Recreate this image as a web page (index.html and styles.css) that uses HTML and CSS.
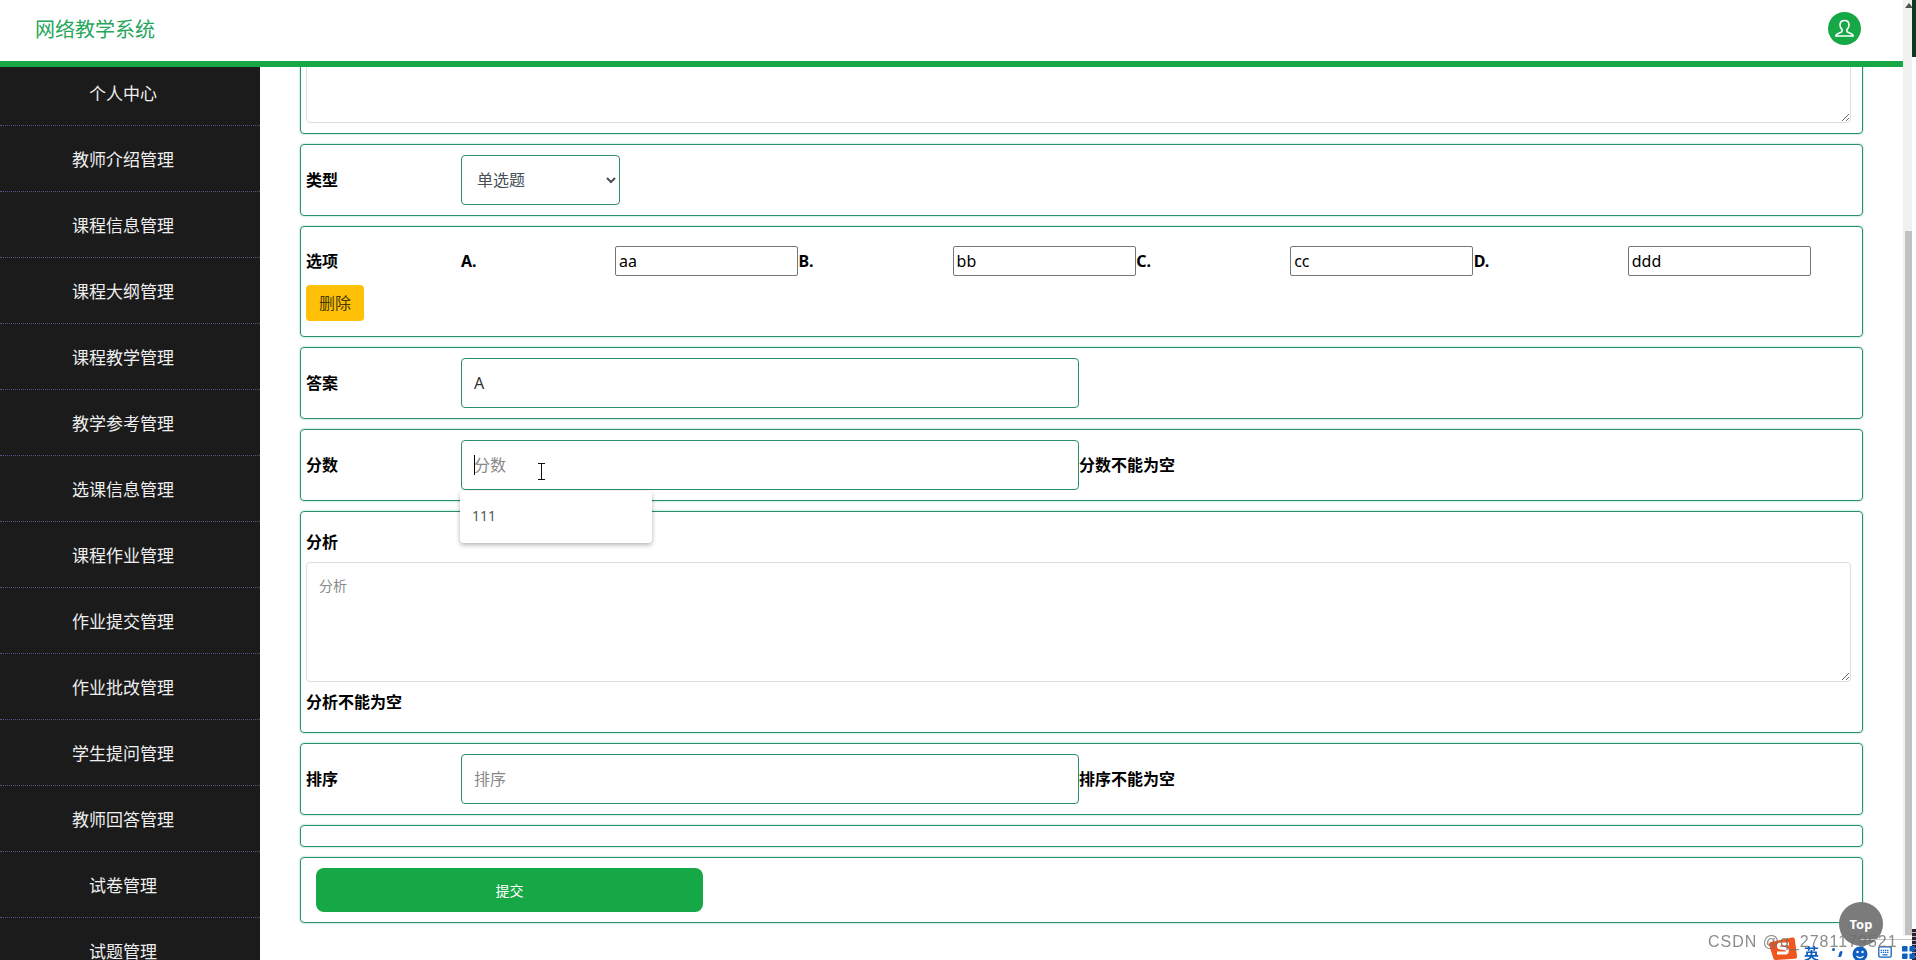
FILE: index.html
```html
<!DOCTYPE html>
<html lang="zh-CN">
<head>
    <meta charset="UTF-8">
    <title>网络教学系统</title>
    <link rel="stylesheet" href="styles.css">
</head>
<body>
    <div class="page">
        <header class="topbar">
            <span class="brand">网络教学系统</span>
            <span class="avatar">
                <svg viewBox="0 0 33 33" width="33" height="33" fill="none" stroke="#fff" stroke-width="1.6">
                    <path d="M16.500 8.500c-2.800 0-4.500 2-4.500 4.600 0 2 .9 3.500 2.100 4.500v1.300c0 .7-.4 1.100-1.100 1.400l-3.300 1.400c-1.200.5-1.800 1.200-1.900 2.300h17.400c-.1-1.100-.7-1.800-1.900-2.300l-3.300-1.400c-.7-.3-1.100-.7-1.100-1.400v-1.300c1.200-1 2.100-2.500 2.100-4.500 0-2.600-1.700-4.600-4.500-4.600z"/>
                </svg>
            </span>
        </header>

        <div class="layout">
            <!-- Side menu -->
            <nav class="sidebar">
                <a class="menu-item">个人中心</a>
                <a class="menu-item">教师介绍管理</a>
                <a class="menu-item">课程信息管理</a>
                <a class="menu-item">课程大纲管理</a>
                <a class="menu-item">课程教学管理</a>
                <a class="menu-item">教学参考管理</a>
                <a class="menu-item">选课信息管理</a>
                <a class="menu-item">课程作业管理</a>
                <a class="menu-item">作业提交管理</a>
                <a class="menu-item">作业批改管理</a>
                <a class="menu-item">学生提问管理</a>
                <a class="menu-item">教师回答管理</a>
                <a class="menu-item">试卷管理</a>
                <a class="menu-item">试题管理</a>
            </nav>

            <!-- Question form, scrolled down a bit -->
            <main class="content">
                <form class="question-form">
                    <div class="panel panel-first">
                        <textarea class="area area-first"></textarea>
                    </div>

                    <div class="panel row">
                        <label class="field-label">类型</label>
                        <select class="field-select">
                            <option>单选题</option>
                        </select>
                    </div>

                    <div class="panel">
                        <div class="row options-row">
                            <label class="field-label">选项</label>
                            <div class="options">
                                <div class="option"><b class="option-key">A.</b><input class="option-input" value="aa"></div>
                                <div class="option"><b class="option-key">B.</b><input class="option-input" value="bb"></div>
                                <div class="option"><b class="option-key">C.</b><input class="option-input" value="cc"></div>
                                <div class="option"><b class="option-key">D.</b><input class="option-input" value="ddd"></div>
                            </div>
                        </div>
                        <button type="button" class="btn-delete">删除</button>
                    </div>

                    <div class="panel row">
                        <label class="field-label">答案</label>
                        <input class="field-input" value="A">
                    </div>

                    <div class="panel row">
                        <label class="field-label">分数</label>
                        <div class="input-wrap">
                            <input class="field-input" placeholder="分数">
                            <span class="caret"></span>
                            <svg class="ibeam" viewBox="0 0 9 17" width="9" height="17" fill="none" stroke="#111" stroke-width="1">
                                <path d="M1 .5h7M4.500.5v16M1 16.500h7"/>
                            </svg>
                            <div class="suggest">111</div>
                        </div>
                        <span class="field-error">分数不能为空</span>
                    </div>

                    <div class="panel panel-analysis">
                        <label class="field-label label-block">分析</label>
                        <textarea class="area area-analysis" placeholder="分析"></textarea>
                        <div class="field-error error-block">分析不能为空</div>
                    </div>

                    <div class="panel row">
                        <label class="field-label">排序</label>
                        <input class="field-input" placeholder="排序">
                        <span class="field-error">排序不能为空</span>
                    </div>

                    <div class="panel"></div>

                    <div class="panel">
                        <button type="button" class="btn-submit">提交</button>
                    </div>
                </form>
            </main>
        </div>
    </div>

    <!-- Page scrollbar -->
    <div class="scrollbar">
        <span class="scroll-up"></span>
        <span class="scroll-thumb"></span>
    </div>
    <div class="desk-edge"></div>
    <div class="desk-corner"></div>

    <a class="to-top">Top</a>

    <!-- Input method toolbar at the bottom corner -->
    <div class="ime-line"></div>
    <svg class="ime-logo" viewBox="0 0 29 23" width="29" height="23">
        <path d="M3 5 24 .5c1.500-.3 2.500.3 2.800 1.800L29 19c.2 1.500-.5 2.500-2 2.800L8 23c-1.500.1-2.500-.5-2.800-2L1 7.500C.8 6.300 1.600 5.300 3 5z" fill="#f0561d"/>
        <path d="M21 7h-8.500c-2.500 0-2.800 3.600-.2 4l5.200.8c2.600.4 2.300 4.200-.3 4.200H9" fill="none" stroke="#fff" stroke-width="3"/>
    </svg>
    <div class="ime">
        <span class="ime-char">英</span>
        <span class="ime-punct">
            <i class="ime-dot"></i>
            <i class="ime-comma"></i>
        </span>
        <svg viewBox="0 0 16 16" width="16" height="16">
            <circle cx="8" cy="8" r="7.500" fill="#0f5fc0"/>
            <circle cx="5.500" cy="6" r="1.200" fill="#fff"/>
            <circle cx="10.500" cy="6" r="1.200" fill="#fff"/>
            <path d="M4.500 10c1.500 2.300 5.500 2.300 7 0" stroke="#fff" stroke-width="1.300" fill="none"/>
        </svg>
        <svg viewBox="0 0 16 14" width="16" height="12" fill="none" stroke="#0f5fc0">
            <rect x=".75" y="1" width="14.500" height="12" rx="1.500" stroke-width="1.500"/>
            <path d="M3 5h10M3 7.500h10" stroke-width="1.500" stroke-dasharray="1.500 1"/>
            <path d="M5 10.300h6" stroke-width="1.300"/>
        </svg>
        <svg viewBox="0 0 14 14" width="13" height="13" fill="#0f5fc0">
            <rect x="0" y="0" width="6" height="6" rx="1"/>
            <rect x="8" y="0" width="6" height="6" rx="1"/>
            <rect x="0" y="8" width="6" height="6" rx="1"/>
            <rect x="8" y="8" width="6" height="6" rx="1"/>
        </svg>
    </div>

    <div class="watermark">CSDN @q_2781179521</div>
</body>
</html>
```

FILE: styles.css
```css
* {
    box-sizing: border-box;
}

html, body {
    height: 100%;
}

body {
    margin: 0;
    overflow: hidden;
    background-color: #fff;
    font-family: "Noto Sans", "Noto Sans CJK SC", sans-serif;
    font-size: 16px;
    color: #000;
}

.page {
    width: 1903px;
    height: 960px;
    display: flex;
    flex-direction: column;
}

/* Top bar */
.topbar {
    height: 67px;
    flex: none;
    display: flex;
    align-items: flex-start;
    justify-content: space-between;
    padding: 12px 42px 0 35px;
    background-color: #fff;
    border-bottom: 6px solid #16a846;
    position: relative;
    z-index: 2;
}

.brand {
    font-size: 20px;
    line-height: 36px;
    color: #26a65b;
}

.avatar {
    width: 33px;
    height: 33px;
    border-radius: 50%;
    background-color: #16a846;
    display: block;
}

.avatar svg {
    display: block;
}

.layout {
    flex: 1;
    display: flex;
    min-height: 0;
}

/* Side menu */
.sidebar {
    width: 260px;
    flex: none;
    background-color: #1b1b1b;
    overflow: hidden;
}

.menu-item {
    display: flex;
    align-items: center;
    justify-content: center;
    height: 66px;
    padding-right: 14px;
    font-size: 17px;
    color: #eee;
    border-bottom: 1px dotted #5c4f86;
}

.menu-item:first-child {
    margin-top: -7px;
}

/* Form */
.content {
    flex: 1;
    min-width: 0;
    overflow: hidden;
    padding: 0 40px;
}

.question-form {
    display: flex;
    flex-direction: column;
    gap: 10px;
    margin-top: -20px;
}

.panel {
    border: 1px solid #2a8f66;
    border-radius: 4px;
    padding: 10px 5px;
    box-shadow: 0 0 2px #6fd0a8;
}

.panel-first {
    height: 87px;
}

.row {
    display: flex;
    align-items: center;
}

.field-label {
    width: 155px;
    flex: none;
    font-weight: bold;
    line-height: 24px;
}

.field-select {
    width: 159px;
    height: 50px;
    padding: 0 11px;
    font-family: inherit;
    font-size: 16px;
    color: #495057;
    background-color: #fff;
    border: 1px solid #2a8f66;
    border-radius: 4px;
}

.field-input {
    width: 618px;
    height: 50px;
    padding: 0 12px;
    font-family: inherit;
    font-size: 16px;
    color: #333;
    background-color: #fff;
    border: 1px solid #2a8f66;
    border-radius: 4px;
    outline: none;
    display: block;
}

.field-input::placeholder {
    color: #888;
}

.field-error {
    font-weight: bold;
    line-height: 24px;
}

.input-wrap {
    position: relative;
}

.caret {
    position: absolute;
    left: 13px;
    top: 15px;
    width: 1px;
    height: 20px;
    background-color: #000;
}

.ibeam {
    position: absolute;
    left: 76px;
    top: 23px;
}

.suggest {
    position: absolute;
    left: -1px;
    top: 51px;
    width: 192px;
    height: 52px;
    padding: 14px 12px;
    font-size: 14px;
    line-height: 22px;
    color: #555;
    background-color: #fff;
    border-radius: 4px;
    box-shadow: 0 2px 5px rgba(0, 0, 0, 0.3);
    z-index: 1;
}

/* Options */
.options-row {
    padding-top: 9px;
}

.options {
    display: flex;
}

.option {
    display: flex;
    align-items: center;
    width: 337.6px;
}

.option-key {
    width: 154px;
}

.option-input {
    width: 183px;
    height: 30px;
    padding: 1px 3px;
    font-family: inherit;
    font-size: 16px;
    border: 1px solid #767676;
    border-radius: 2px;
}

.btn-delete {
    display: block;
    width: 58px;
    height: 36px;
    margin: 9px 0 5px;
    padding: 0 0 2px;
    font-family: inherit;
    font-size: 16px;
    color: #4a3a00;
    background-color: #ffc107;
    border: none;
    border-radius: 4px;
}

/* Analysis */
.area {
    display: block;
    width: 1545px;
    padding: 12px 12px;
    font-family: inherit;
    font-size: 14px;
    border: 1px solid #ddd;
    border-radius: 4px;
    background-color: #fff;
}

.area::placeholder {
    color: #888;
}

.area-first {
    height: 65px;
}

.area-analysis {
    height: 120px;
}

.label-block {
    display: block;
    margin: 8px 0 8px;
}

.error-block {
    margin: 8px 0 8px;
}

/* Submit */
.btn-submit {
    display: block;
    width: 387px;
    height: 44px;
    margin-left: 10px;
    font-family: inherit;
    font-size: 14px;
    color: #fff;
    background-color: #16a846;
    border: none;
    border-radius: 8px;
}

/* Things laid over the page */
.scrollbar {
    position: fixed;
    left: 1903px;
    top: 0;
    width: 9px;
    height: 936px;
    background-color: #f1f1f1;
}

.scroll-up {
    position: absolute;
    left: 2px;
    top: 3px;
    border: 4px solid transparent;
    border-top: 0;
    border-bottom: 5px solid #505050;
}

.scroll-thumb {
    position: absolute;
    left: 2px;
    top: 231px;
    width: 7px;
    height: 704px;
    background-color: #c1c1c1;
}

.desk-edge {
    position: fixed;
    left: 1912px;
    top: 0;
    width: 4px;
    height: 57px;
    background-color: #0d3a22;
}

.desk-corner {
    position: fixed;
    left: 1912px;
    top: 929px;
    width: 4px;
    height: 31px;
    background: repeating-linear-gradient(#2a2030 0, #2a2030 3px, #b9a8c8 3px, #b9a8c8 4px);
}

.to-top {
    position: fixed;
    left: 1839px;
    top: 902px;
    width: 44px;
    height: 44px;
    border-radius: 50%;
    background-color: #7b7b7b;
    color: #fff;
    font-size: 13px;
    font-weight: bold;
    line-height: 44px;
    text-align: center;
}

.ime-line {
    position: fixed;
    left: 1860px;
    top: 939px;
    width: 52px;
    height: 1px;
    background-color: #c4c4c4;
}

.ime-logo {
    position: fixed;
    left: 1768px;
    top: 937px;
}

.ime {
    position: fixed;
    left: 1804px;
    top: 946px;
    width: 112px;
    height: 14px;
    display: flex;
    align-items: flex-start;
    overflow: hidden;
}

.ime-char {
    width: 28px;
    font-size: 15px;
    font-weight: bold;
    line-height: 14px;
    color: #0f5fc0;
}

.ime-punct {
    width: 20px;
    position: relative;
    height: 14px;
}

.ime-dot {
    position: absolute;
    left: 0;
    top: 2px;
    width: 3px;
    height: 3px;
    border-radius: 50%;
    background-color: #0f5fc0;
}

.ime-comma {
    position: absolute;
    left: 7px;
    top: 5px;
    width: 3px;
    height: 6px;
    border-radius: 2px 2px 2px 0;
    background-color: #0f5fc0;
    transform: skewX(-15deg);
}

.ime svg {
    flex: none;
    margin-right: 9px;
}

.ime svg:last-child {
    margin-right: 0;
}

.watermark {
    position: fixed;
    left: 1708px;
    top: 931px;
    font-family: "Liberation Sans", sans-serif;
    font-size: 16px;
    letter-spacing: 1px;
    line-height: 22px;
    color: rgba(110, 110, 110, 0.8);
    white-space: nowrap;
}
```
